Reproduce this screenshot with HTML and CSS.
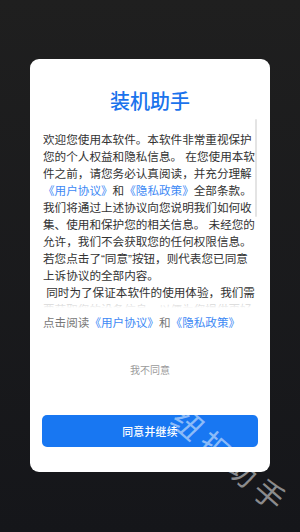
FILE: index.html
```html
<!DOCTYPE html>
<html lang="zh-CN">
<head>
<meta charset="utf-8">
<title>装机助手</title>
<link rel="stylesheet" href="styles.css">
</head>
<body>
<div class="screen">
  <div class="card">
    <h1 class="title">装机助手</h1>
    <div class="viewport">
      <div class="content">欢迎您使用本软件。本软件非常重视保护您的个人权益和隐私信息。 在您使用本软件之前，请您务必认真阅读，并充分理解<a class="link">《用户协议》</a>和<a class="link">《隐私政策》</a>全部条款。我们将通过上述协议向您说明我们如何收集、使用和保护您的相关信息。 未经您的允许，我们不会获取您的任何权限信息。若您点击了“同意”按钮，则代表您已同意上诉协议的全部内容。<br>&nbsp;同时为了保证本软件的使用体验，我们需要获取您的设备信息，以便为您提供更好的装机服务，请您知悉。</div>
      <div class="scrollbar"></div>
      <div class="fade"></div>
    </div>
    <p class="read">点击阅读<a class="link">《用户协议》</a>和<a class="link">《隐私政策》</a></p>
    <p class="decline">我不同意</p>
    <button class="agree">同意并继续</button>
  </div>
  <div class="watermark">纽扣助手</div>
</div>
</body>
</html>
```
FILE: styles.css
```css
html, body {
  margin: 0;
  padding: 0;
}
body {
  width: 300px;
  height: 532px;
  overflow: hidden;
  font-family: "Liberation Sans", "Noto Sans CJK SC", sans-serif;
}
.screen {
  position: relative;
  width: 300px;
  height: 532px;
  background: linear-gradient(#1f1f1f, #15161a);
  display: flex;
  justify-content: center;
  align-items: flex-start;
  overflow: hidden;
}
.card {
  margin-top: 59px;
  width: 240px;
  box-sizing: border-box;
  background: #ffffff;
  border-radius: 9px;
  padding: 30px 12px 25px 12px;
  display: flex;
  flex-direction: column;
}
.title {
  margin: 0;
  font-size: 20px;
  line-height: 26px;
  font-weight: 500;
  color: #1a73ec;
  text-align: center;
}
.viewport {
  position: relative;
  margin-top: 4px;
  height: 189px;
  overflow: hidden;
  padding-top: 12px;
  box-sizing: border-box;
}
.content {
  padding-left: 1px;
  width: 213px;
  font-size: 11.6px;
  line-height: 17px;
  color: #333333;
}
.link {
  color: #3d89f5;
}
.scrollbar {
  position: absolute;
  top: 0;
  left: 213px;
  width: 2px;
  height: 98px;
  background: #e4e4e4;
  border-radius: 1px;
}
.fade {
  position: absolute;
  left: 0;
  right: 0;
  bottom: 0;
  height: 8px;
  background: linear-gradient(rgba(255, 255, 255, 0.55), #ffffff);
}
.read {
  margin: 5.5px 0 0 0;
  padding-left: 1px;
  font-size: 11.6px;
  line-height: 17px;
  color: #777777;
}
.decline {
  margin: 31px 0 0 0;
  font-size: 10px;
  line-height: 17px;
  color: #9a9a9a;
  text-align: center;
}
.agree {
  margin-top: 36.5px;
  height: 32px;
  border: none;
  border-radius: 5px;
  background: #1877f2;
  color: #ffffff;
  font-family: "Liberation Sans", "Noto Sans CJK SC", sans-serif;
  font-size: 10.8px;
  font-weight: 500;
  letter-spacing: 0.3px;
  padding: 0;
}
.watermark {
  position: absolute;
  left: 230px;
  top: 462px;
  transform: translate(-50%, -50%) rotate(41deg);
  font-size: 30px;
  line-height: 30px;
  letter-spacing: 6px;
  white-space: nowrap;
  color: rgba(255, 255, 255, 0.52);
  pointer-events: none;
}
```
